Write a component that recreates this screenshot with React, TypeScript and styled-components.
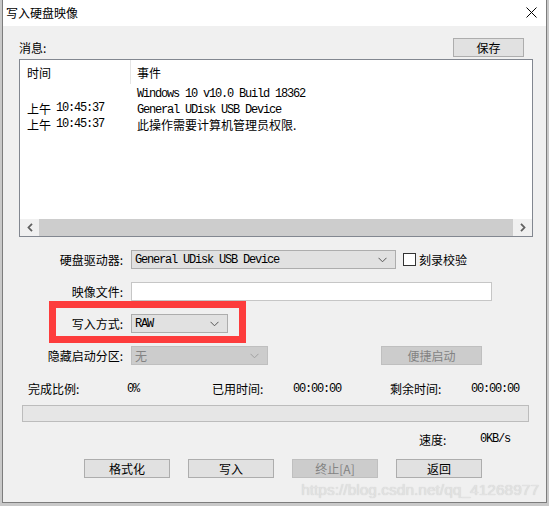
import React from 'react'
import styled, { createGlobalStyle } from 'styled-components'

const GlobalStyle = createGlobalStyle`
  html, body {
    margin: 0;
    padding: 0;
    background: #c9c9c9;
  }
  * {
    box-sizing: border-box;
  }
`

const cjk = `"Noto Sans CJK SC", "Microsoft YaHei", sans-serif`

const Window = styled.div`
  position: relative;
  margin-left: 2px;
  width: 545px;
  height: 503px;
  background: #f0f0f0;
  border: 1px solid #7d7d7d;
  border-top: none;
  font-family: ${cjk};
  font-size: 12px;
  color: #000;
  overflow: hidden;
`

const TitleBar = styled.div`
  height: 26px;
  background: #fff;
  display: flex;
  align-items: center;
  justify-content: space-between;
  padding: 0 9px 2px 3px;
  font-size: 12px;
`

const Body = styled.div`
  padding: 12px 13px 0 16px;
  display: flex;
  flex-direction: column;
`

const Mono = styled.span`
  font-family: 'Liberation Mono', monospace;
  font-size: 12px;
  letter-spacing: -1.2px;
`

const MessageBar = styled.div`
  display: flex;
  align-items: center;
  justify-content: space-between;
  height: 19px;
  padding-right: 9px;
`

const Button = styled.div<{ $width?: number; $disabled?: boolean }>`
  width: ${(p) => p.$width ?? 86}px;
  height: 19px;
  display: flex;
  align-items: center;
  justify-content: center;
  background: ${(p) => (p.$disabled ? '#cccccc' : '#e1e1e1')};
  border: 1px solid ${(p) => (p.$disabled ? '#bfbfbf' : '#adadad')};
  color: ${(p) => (p.$disabled ? '#838383' : '#000')};
  font-size: 12px;
`

const ListBox = styled.div`
  margin-top: 2px;
  height: 178px;
  background: #fff;
  border: 1px solid #828790;
  display: flex;
  flex-direction: column;
`

const ListHeader = styled.div`
  height: 24px;
  display: flex;
  align-items: stretch;
`

const HeaderCell = styled.div<{ $width?: number }>`
  display: flex;
  align-items: center;
  padding-left: ${(p) => (p.$width ? 7 : 6)}px;
  width: ${(p) => (p.$width ? `${p.$width}px` : 'auto')};
  border-right: ${(p) => (p.$width ? '1px solid #e5e5e5' : 'none')};
  flex: ${(p) => (p.$width ? 'none' : 1)};
`

const ListRow = styled.div`
  height: 16px;
  display: flex;
  align-items: center;
  white-space: nowrap;
`

const TimeCell = styled.div`
  width: 111px;
  padding-left: 7px;
  display: flex;
  gap: 5px;
  align-items: center;
`

const EventCell = styled.div`
  padding-left: 6px;
`

const Filler = styled.div`
  flex: 1;
`

const HScroll = styled.div`
  height: 17px;
  display: flex;
  background: #f0f0f0;
`

const ScrollArrow = styled.div`
  width: 19px;
  display: flex;
  align-items: center;
  justify-content: center;
`

const ScrollThumb = styled.div`
  flex: 1;
  background: #cdcdcd;
`

const Form = styled.div`
  margin-top: 13px;
  display: flex;
  flex-direction: column;
  gap: 13px;
`

const FormRow = styled.div`
  position: relative;
  display: flex;
  align-items: center;
  height: 19px;
`

const Label = styled.div`
  width: 104px;
  text-align: right;
  margin-right: 8px;
  white-space: nowrap;
`

const Combo = styled.div<{ $width: number; $disabled?: boolean }>`
  width: ${(p) => p.$width}px;
  height: 19px;
  display: flex;
  align-items: center;
  justify-content: space-between;
  padding: 0 8px 0 3px;
  background: ${(p) => (p.$disabled ? '#cccccc' : '#e1e1e1')};
  border: 1px solid ${(p) => (p.$disabled ? '#bfbfbf' : '#adadad')};
  color: ${(p) => (p.$disabled ? '#838383' : '#000')};
`

const TextBox = styled.div`
  width: 361px;
  height: 19px;
  background: #fff;
  border: 1px solid #c6c6c6;
`

const CheckWrap = styled.div`
  margin-left: 7px;
  display: flex;
  align-items: center;
  gap: 3px;
`

const CheckBox = styled.div`
  width: 13px;
  height: 13px;
  background: #fff;
  border: 1px solid #333;
`

const Highlight = styled.div`
  position: absolute;
  left: 30px;
  top: -13px;
  width: 197px;
  height: 42px;
  border: 7px solid #fd3c3c;
  pointer-events: none;
`

const StatsRow = styled.div`
  margin-top: 15px;
  height: 16px;
  display: grid;
  grid-template-columns: 99px 85px 81px 97px 81px auto;
  align-items: center;
  padding-left: 9px;
  white-space: nowrap;
`

const Progress = styled.div`
  margin: 9px 0 0 3px;
  width: 507px;
  height: 17px;
  background: #e6e6e6;
  border: 1px solid #bcbcbc;
`

const SpeedRow = styled.div`
  margin-top: 9px;
  height: 16px;
  display: flex;
  align-items: center;
  padding-left: 400px;
`

const SpeedLabel = styled.div`
  width: 61px;
`

const ButtonRow = styled.div`
  margin-top: 12px;
  display: flex;
  gap: 18px;
  padding-left: 65px;
`

const Watermark = styled.div`
  position: absolute;
  right: 7px;
  top: 481px;
  font-family: 'Liberation Sans', Arial, sans-serif;
  font-size: 15.5px;
  color: #e2e2e2;
  text-shadow: 0 0 1px #c8c8c8;
  pointer-events: none;
`

const Chevron = ({ color = '#555' }: { color?: string }) => (
  <svg width="9" height="6" viewBox="0 0 9 6">
    <path d="M0.5 0.8 L4.5 4.8 L8.5 0.8" fill="none" stroke={color} strokeWidth="1" />
  </svg>
)

const Arrow = ({ dir }: { dir: 'left' | 'right' }) => (
  <svg width="6" height="9" viewBox="0 0 6 9">
    <path
      d={dir === 'left' ? 'M5 0.8 L1.5 4.5 L5 8.2' : 'M1 0.8 L4.5 4.5 L1 8.2'}
      fill="none"
      stroke="#606060"
      strokeWidth="1.8"
    />
  </svg>
)

const logs = [
  { time: '', event: <Mono>Windows 10 v10.0 Build 18362</Mono> },
  { time: '10:45:37', event: <Mono>General UDisk USB Device</Mono> },
  { time: '10:45:37', event: <span>此操作需要计算机管理员权限.</span> },
]

export default function App() {
  return (
    <>
      <GlobalStyle />
      <Window>
        <TitleBar>
          <span>写入硬盘映像</span>
          <svg width="11" height="11" viewBox="0 0 11 11">
            <path d="M0.5 0.5 L10.5 10.5 M10.5 0.5 L0.5 10.5" stroke="#000" strokeWidth="1" />
          </svg>
        </TitleBar>
        <Body>
          <MessageBar>
            <span>消息:</span>
            <Button $width={71}>保存</Button>
          </MessageBar>
          <ListBox>
            <ListHeader>
              <HeaderCell $width={111}>时间</HeaderCell>
              <HeaderCell>事件</HeaderCell>
            </ListHeader>
            {logs.map((log, i) => (
              <ListRow key={i}>
                <TimeCell>
                  {log.time && (
                    <>
                      <span>上午</span>
                      <Mono>{log.time}</Mono>
                    </>
                  )}
                </TimeCell>
                <EventCell>{log.event}</EventCell>
              </ListRow>
            ))}
            <Filler />
            <HScroll>
              <ScrollArrow>
                <Arrow dir="left" />
              </ScrollArrow>
              <ScrollThumb />
              <ScrollArrow>
                <Arrow dir="right" />
              </ScrollArrow>
            </HScroll>
          </ListBox>

          <Form>
            <FormRow>
              <Label>硬盘驱动器:</Label>
              <Combo $width={265}>
                <Mono>General UDisk USB Device</Mono>
                <Chevron />
              </Combo>
              <CheckWrap>
                <CheckBox />
                <span>刻录校验</span>
              </CheckWrap>
            </FormRow>
            <FormRow>
              <Label>映像文件:</Label>
              <TextBox />
            </FormRow>
            <FormRow>
              <Highlight />
              <Label>写入方式:</Label>
              <Combo $width={97}>
                <Mono>RAW</Mono>
                <Chevron />
              </Combo>
            </FormRow>
            <FormRow>
              <Label>隐藏启动分区:</Label>
              <Combo $width={137} $disabled>
                <span>无</span>
                <Chevron color="#a0a0a0" />
              </Combo>
              <Button $width={101} $disabled style={{ marginLeft: 113 }}>
                便捷启动
              </Button>
            </FormRow>
          </Form>

          <StatsRow>
            <span>完成比例:</span>
            <Mono>0%</Mono>
            <span>已用时间:</span>
            <Mono>00:00:00</Mono>
            <span>剩余时间:</span>
            <Mono>00:00:00</Mono>
          </StatsRow>

          <Progress />

          <SpeedRow>
            <SpeedLabel>速度:</SpeedLabel>
            <Mono>0KB/s</Mono>
          </SpeedRow>

          <ButtonRow>
            <Button>格式化</Button>
            <Button>写入</Button>
            <Button $disabled>终止[A]</Button>
            <Button>返回</Button>
          </ButtonRow>
        </Body>
        <Watermark>https://blog.csdn.net/qq_41268977</Watermark>
      </Window>
    </>
  )
}
